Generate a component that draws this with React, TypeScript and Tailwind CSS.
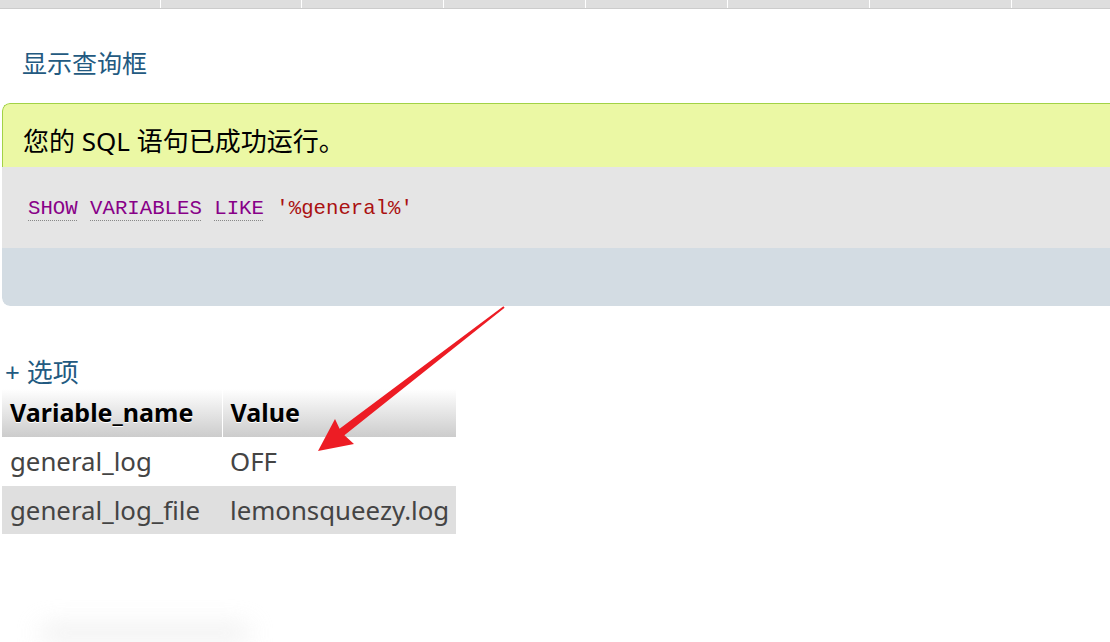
const tabs = [161, 141, 142, 142, 142, 142, 142, 142];

const rows = [
  { name: "general_log", value: "OFF" },
  { name: "general_log_file", value: "lemonsqueezy.log" },
];

function Arrow() {
  return (
    <svg className="absolute left-0 top-0 pointer-events-none" width="1110" height="642" viewBox="0 0 1110 642">
      <polygon
        points="503.4,306.2 339.6,428.8 335,419 318,451 354,444 344.4,435.2 504.6,307.8"
        fill="#ed1c24"
      />
    </svg>
  );
}

export default function App() {
  return (
    <div
      className="relative w-[1110px] h-[642px] overflow-hidden bg-white"
      style={{ fontFamily: '"Noto Sans", "Noto Sans CJK SC", sans-serif' }}
    >
      <div className="flex h-[9px] bg-[#dedede] border-b border-[#cccccc]">
        {tabs.map((w, i) => (
          <div key={i} className="shrink-0 border-r border-white" style={{ width: w }} />
        ))}
      </div>

      <h2 className="mt-[38px] ml-[22px] text-[25px] leading-[32px] text-[#235a81]">显示查询框</h2>

      <div className="mt-[24px] ml-[2px] w-[1130px] rounded-l-[8px] overflow-hidden">
        <div className="h-[64px] bg-[#ebf8a4] border-t border-l border-[#a2d246] rounded-tl-[8px] flex items-center pt-[10px] pl-[20px] text-[26px] leading-[32px] text-black">
          您的 SQL 语句已成功运行。
        </div>
        <div
          className="h-[81px] bg-[#e5e5e5] flex items-center pt-[3px] pl-[26px] text-[20.7px]"
          style={{ fontFamily: '"Liberation Mono", "Noto Sans CJK SC", monospace' }}
        >
          <span className="text-[#880088] underline decoration-dotted decoration-[#888] underline-offset-[6px] decoration-1">SHOW</span>
          <span>&nbsp;</span>
          <span className="text-[#880088] underline decoration-dotted decoration-[#888] underline-offset-[6px] decoration-1">VARIABLES</span>
          <span>&nbsp;</span>
          <span className="text-[#880088] underline decoration-dotted decoration-[#888] underline-offset-[6px] decoration-1">LIKE</span>
          <span>&nbsp;</span>
          <span className="text-[#aa1111]">'%general%'</span>
        </div>
        <div className="h-[58px] bg-[#d3dce3] rounded-bl-[8px]" />
      </div>

      <div className="mt-[50px] ml-[5px] text-[26px] leading-[32px] text-[#235a81]">+ 选项</div>

      <table className="ml-[2px] mt-[1px] border-collapse">
        <thead>
          <tr className="h-[48px] bg-gradient-to-b from-white to-[#cccccc] text-[25px]">
            <th className="w-[220px] text-left font-bold pl-[8px] pr-[4px] text-black border-r border-white [text-shadow:0_1px_0_#fff]">
              Variable_name
            </th>
            <th className="w-[234px] text-left font-bold pl-[8px] pr-[4px] text-black [text-shadow:0_1px_0_#fff]">
              Value
            </th>
          </tr>
        </thead>
        <tbody className="text-[25.8px]">
          {rows.map((r, i) => (
            <tr key={r.name} className={i % 2 === 0 ? "h-[49px] bg-white" : "h-[48px] bg-[#dfdfdf]"}>
              <td className="pl-[8px] text-[#444444]">{r.name}</td>
              <td className="pl-[8px] text-[#444444]">{r.value}</td>
            </tr>
          ))}
        </tbody>
      </table>

      <div className="mt-[92px] ml-[40px] w-[210px] h-[14px] rounded-full bg-[#e4e4e4] blur-md opacity-70" />

      <Arrow />
    </div>
  );
}
